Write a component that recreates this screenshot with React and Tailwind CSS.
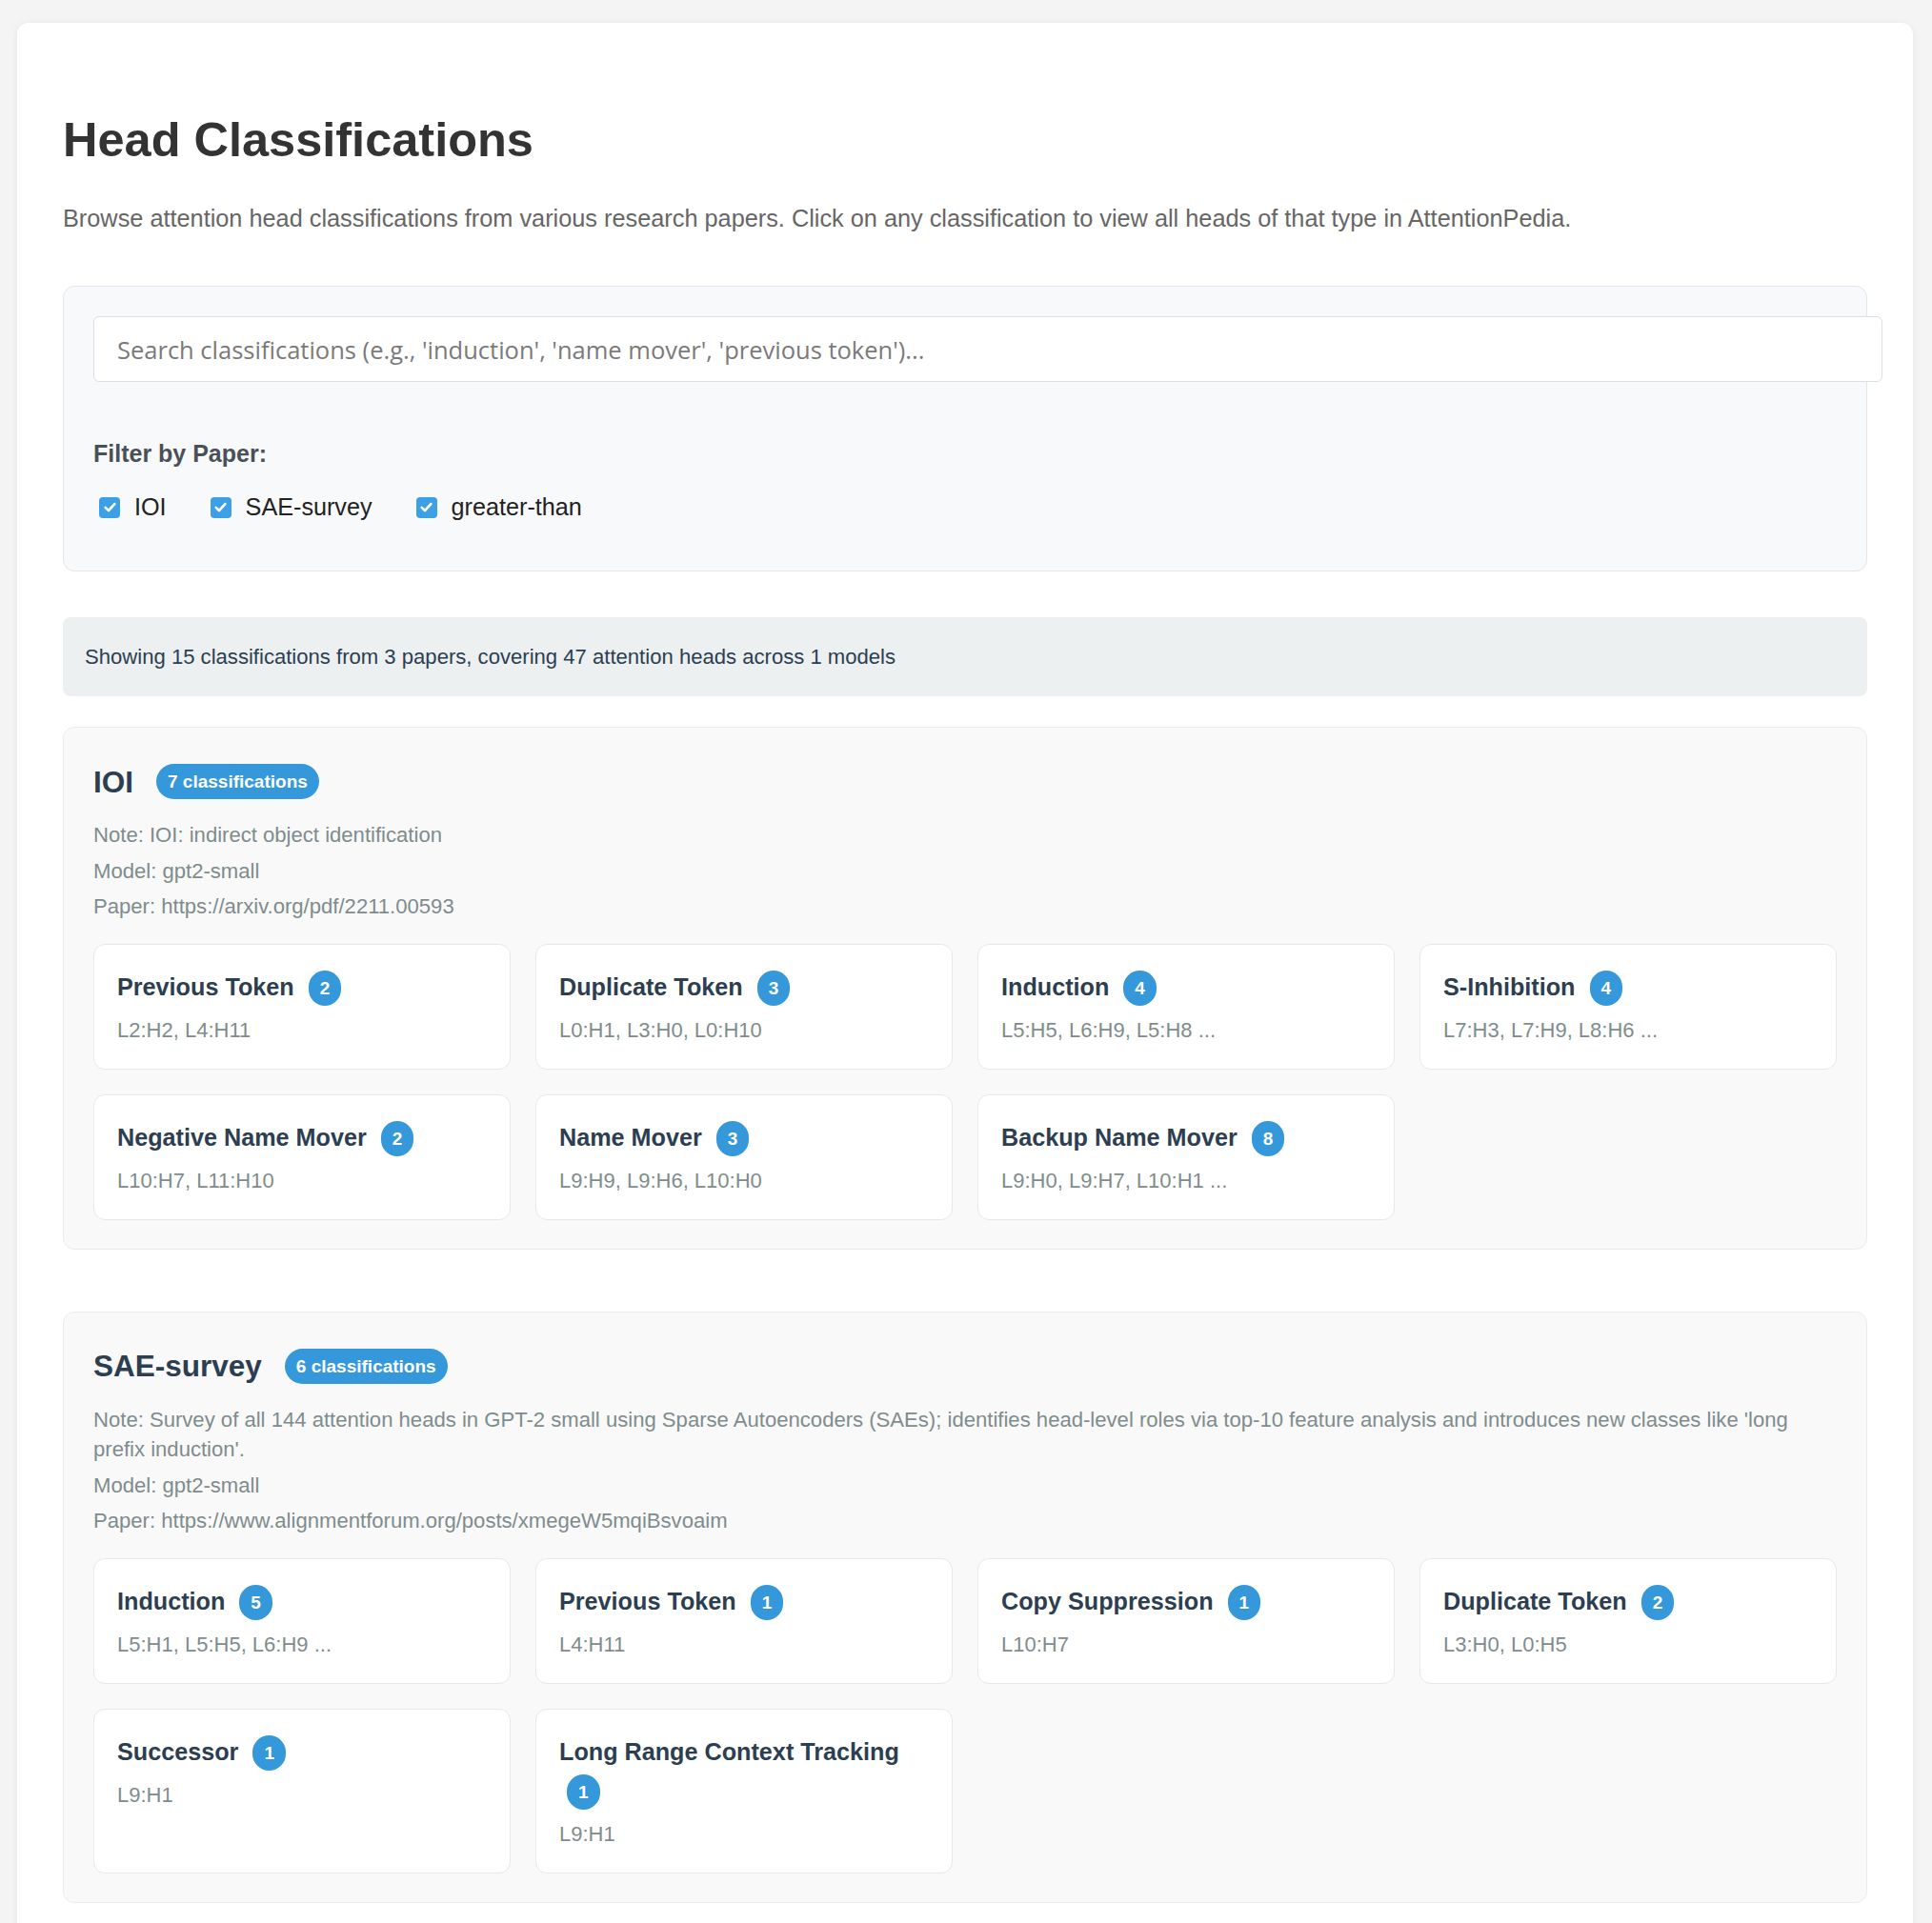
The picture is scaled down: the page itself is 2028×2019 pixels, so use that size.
import React from 'react';

const papers = [
  {
    name: 'IOI',
    note: 'Note: IOI: indirect object identification',
    model: 'Model: gpt2-small',
    paper: 'Paper: https://arxiv.org/pdf/2211.00593',
    items: [
      { title: 'Previous Token', count: 2, heads: 'L2:H2, L4:H11' },
      { title: 'Duplicate Token', count: 3, heads: 'L0:H1, L3:H0, L0:H10' },
      { title: 'Induction', count: 4, heads: 'L5:H5, L6:H9, L5:H8 ...' },
      { title: 'S-Inhibition', count: 4, heads: 'L7:H3, L7:H9, L8:H6 ...' },
      { title: 'Negative Name Mover', count: 2, heads: 'L10:H7, L11:H10' },
      { title: 'Name Mover', count: 3, heads: 'L9:H9, L9:H6, L10:H0' },
      { title: 'Backup Name Mover', count: 8, heads: 'L9:H0, L9:H7, L10:H1 ...' },
    ],
  },
  {
    name: 'SAE-survey',
    note: "Note: Survey of all 144 attention heads in GPT-2 small using Sparse Autoencoders (SAEs); identifies head-level roles via top-10 feature analysis and introduces new classes like 'long prefix induction'.",
    model: 'Model: gpt2-small',
    paper: 'Paper: https://www.alignmentforum.org/posts/xmegeW5mqiBsvoaim',
    items: [
      { title: 'Induction', count: 5, heads: 'L5:H1, L5:H5, L6:H9 ...' },
      { title: 'Previous Token', count: 1, heads: 'L4:H11' },
      { title: 'Copy Suppression', count: 1, heads: 'L10:H7' },
      { title: 'Duplicate Token', count: 2, heads: 'L3:H0, L0:H5' },
      { title: 'Successor', count: 1, heads: 'L9:H1' },
      { title: 'Long Range Context Tracking', count: 1, heads: 'L9:H1' },
    ],
  },
];

const Badge = ({ children, className = '' }) => (
  <span
    className={`inline-block h-[37px] px-[12px] rounded-full bg-[#3498db] text-white text-[19px] font-bold leading-[37px] ${className}`}
  >
    {children}
  </span>
);

const Check = ({ label }) => (
  <label className="flex items-center mr-[40px]">
    <span className="ml-[6px] mr-[15px] w-[22px] h-[22px] rounded-[4px] bg-[#3ea0e4] flex items-center justify-center">
      <svg width="15" height="15" viewBox="0 0 14 14" fill="none">
        <polyline points="2.5,7.3 5.6,10.3 11.5,3.8" stroke="white" strokeWidth="2.4" strokeLinecap="round" strokeLinejoin="round" />
      </svg>
    </span>
    <span className="text-[25.2px] leading-[37px] text-[#222]">{label}</span>
  </label>
);

const ClassCard = ({ item }) => (
  <div className="bg-white border border-[#e6e8eb] rounded-[12px] p-[24px] cursor-pointer">
    <h4 className="text-[25.2px] font-bold leading-[41px] text-[#2c3e50]">
      {item.title}{' '}
      <Badge className="ml-[8px] align-middle">{item.count}</Badge>
    </h4>
    <div className="mt-[9px] text-[22px] leading-[32px] text-[#7f8c8d]">{item.heads}</div>
  </div>
);

const PaperSection = ({ paper, className = '' }) => (
  <div className={`bg-[#f9f9f9] border border-[#ececec] rounded-[12px] px-[31px] pt-[38px] pb-[30px] ${className}`}>
    <div className="flex items-center h-[37px]">
      <h3 className="text-[31.5px] font-bold text-[#2c3e50] leading-[36px]">{paper.name}</h3>
      <Badge className="ml-[24px]">{paper.items.length} classifications</Badge>
    </div>
    <div className="mt-[22px] space-y-[6px] text-[22.1px] leading-[31.5px] text-[#7f8c8d]">
      <p>{paper.note}</p>
      <p>{paper.model}</p>
      <p>{paper.paper}</p>
    </div>
    <div className="mt-[23px] grid grid-cols-4 gap-[26px]">
      {paper.items.map((item) => (
        <ClassCard key={item.title} item={item} />
      ))}
    </div>
  </div>
);

export default function App() {
  return (
    <div className="min-h-screen bg-[#f4f4f4] pl-[18px] pr-[20px] pt-[24px] font-['Liberation_Sans',Arial,sans-serif]">
      <div className="bg-white rounded-[12px] shadow-[0_1px_8px_rgba(0,0,0,0.06)] px-[48px] pt-[94px] pb-[200px]">
        <h1 className="text-[50.5px] font-bold leading-[57px] text-[#333]">Head Classifications</h1>
        <p className="mt-[40px] text-[25.3px] leading-[29px] text-[#666]">
          Browse attention head classifications from various research papers. Click on any classification to view all heads of that type in AttentionPedia.
        </p>

        <div className="mt-[56px] bg-[#f8f9fa] border border-[#e3e6ea] rounded-[12px] px-[31px] pt-[31px] pb-[48px]">
          <input
            type="text"
            placeholder="Search classifications (e.g., 'induction', 'name mover', 'previous token')..."
            className="block w-[calc(100%+48px)] h-[69px] bg-white border border-[#dcdfe3] rounded-[6px] pl-[24px] text-[25.5px] font-['Open_Sans',sans-serif] text-[#333] placeholder:text-[#7a7a7a] outline-none"
          />
          <div className="mt-[61px] text-[25px] font-bold leading-[29px] text-[#4a5058]">Filter by Paper:</div>
          <div className="mt-[23px] flex items-center">
            <Check label="IOI" />
            <Check label="SAE-survey" />
            <Check label="greater-than" />
          </div>
        </div>

        <div className="mt-[48px] h-[83px] flex items-center px-[23px] bg-[#ecf0f1] rounded-[8px] text-[22.1px] text-[#2c3e50]">
          Showing 15 classifications from 3 papers, covering 47 attention heads across 1 models
        </div>

        <PaperSection paper={papers[0]} className="mt-[32px]" />
        <PaperSection paper={papers[1]} className="mt-[65px]" />
      </div>
    </div>
  );
}
